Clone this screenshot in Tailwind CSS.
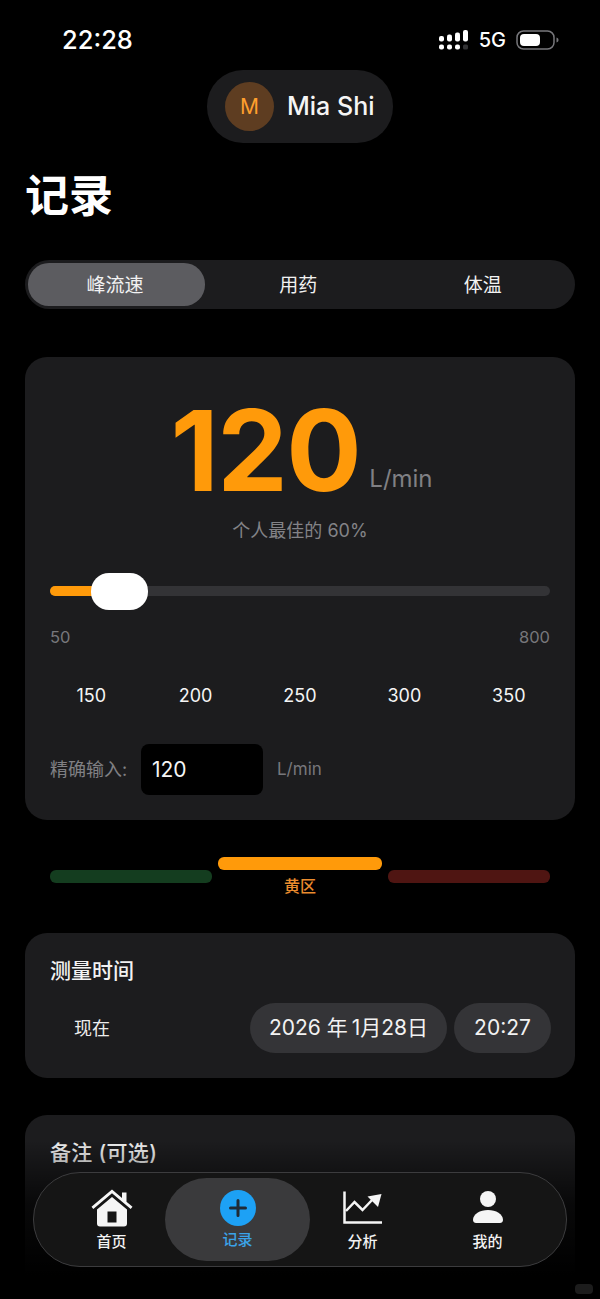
<!DOCTYPE html>
<html lang="zh">
<head>
<meta charset="utf-8">
<script src="https://cdn.jsdelivr.net/npm/@tailwindcss/browser@4"></script>
</head>
<body class="bg-black">
<div class="relative w-[600px] h-[1299px] overflow-hidden bg-black text-white font-['Inter','Noto_Sans_CJK_SC',sans-serif]">

  <!-- status bar -->
  <div class="h-[70px] flex items-center justify-between pl-[62px] pr-[41px] pt-[10px]">
    <span class="text-[25.500px] leading-none font-medium">22:28</span>
    <div class="flex items-center">
      <svg width="30" height="20" viewBox="0 0 30 20" fill="#fff">
        <rect x="0" y="6" width="5" height="5.500" rx="2"/><rect x="0" y="14.500" width="5" height="5" rx="2"/>
        <rect x="8" y="4.500" width="5" height="7" rx="2"/><rect x="8" y="14.500" width="5" height="5" rx="2"/>
        <rect x="16" y="2.500" width="5" height="9" rx="2"/><rect x="16" y="14.500" width="5" height="5" rx="2"/>
        <rect x="24" y="0" width="5" height="11.500" rx="2"/><rect x="24" y="14.500" width="5" height="5" rx="1.500" fill="#333335"/>
      </svg>
      <span class="ml-[10px] text-[20px] leading-none font-medium">5G</span>
      <svg class="ml-[10px]" width="43" height="20" viewBox="0 0 43 20">
        <rect x="1" y="1" width="37" height="18" rx="6.500" fill="none" stroke="#77777b" stroke-width="1.500"/>
        <rect x="4" y="4" width="20" height="12" rx="4" fill="#fff"/>
        <path d="M40.500 7.500c1.500.5 2 1.500 2 2.500s-.5 2-2 2.500z" fill="#77777b"/>
      </svg>
    </div>
  </div>

  <!-- profile pill -->
  <div class="flex justify-center">
    <div class="w-[186px] h-[73px] rounded-[36px] bg-[#1c1c1e] flex items-center pl-[18px]">
      <div class="w-[49px] h-[49px] rounded-full bg-[#5e3d21] flex items-center justify-center text-[#ff9f2e] text-[21px]">M</div>
      <span class="ml-[13px] text-[25px] leading-none font-medium text-[#f5f5f5]">Mia Shi</span>
    </div>
  </div>

  <!-- content -->
  <div class="px-[25px]">
    <h1 class="mt-[28px] h-[50px] text-[44px] leading-[50px] font-bold">记录</h1>

    <!-- segmented -->
    <div class="mt-[39px] h-[49px] rounded-[25px] bg-[#1c1c1e] p-[3px] grid grid-cols-[177px_1fr_1fr] text-[19px] items-center text-center text-[#f2f2f2]">
      <div class="h-[43px] rounded-[21px] bg-[#5c5c60] flex items-center justify-center pt-[3px] pr-[3px]">峰流速</div>
      <div class="pl-[3px] pt-[3px]">用药</div>
      <div class="pl-[5px] pt-[3px]">体温</div>
    </div>

    <!-- main card -->
    <div class="mt-[48px] h-[463px] rounded-[22px] bg-[#1c1c1e] px-[25px]">
      <div class="h-[138px] flex items-end justify-center">
        <span class="text-[#ff9a0a] text-[112px] leading-none font-bold tracking-[-1.500px] ml-[3px] translate-y-[11px]">120</span>
        <span class="ml-[9px] text-[#808084] text-[24px] leading-none translate-y-[-4px]">L/min</span>
      </div>
      <div class="mt-[26px] h-[20px] text-center text-[18px] leading-[20px] text-[#838387]">个人最佳的 60%</div>

      <div class="relative mt-[45px] h-[10px] rounded-full bg-[#333336]">
        <div class="h-full w-[50px] rounded-l-full bg-[#ff9a0a]"></div>
        <div class="absolute left-[41px] top-[-13px] w-[57px] h-[37px] rounded-[18px] bg-white"></div>
      </div>

      <div class="mt-[31px] flex justify-between text-[16.500px] leading-[20px] text-[#77777b]">
        <span>50</span><span>800</span>
      </div>

      <div class="mt-[38px] grid grid-cols-5 -mx-[11px] text-[18px] leading-[22px] text-center text-[#f5f5f5]">
        <span>150</span><span>200</span><span>250</span><span>300</span><span>350</span>
      </div>

      <div class="mt-[37px] flex items-center">
        <span class="w-[91px] text-[18px] text-[#808084]">精确输入:</span>
        <div class="w-[122px] h-[51px] rounded-[8px] bg-black pl-[11px] flex items-center text-[21px] text-[#f5f5f5]">120</div>
        <span class="ml-[14px] text-[17px] text-[#77777b]">L/min</span>
      </div>
    </div>

    <!-- zones -->
    <div class="mt-[37px] mx-[25px] h-[40px] grid grid-cols-[162px_164px_1fr] gap-[6px]">
      <div class="pt-[13px]"><div class="h-[13px] rounded-[6px] bg-[#143d1f]"></div></div>
      <div class="text-center">
        <div class="h-[13px] rounded-[6px] bg-[#ff9a0a]"></div>
        <div class="mt-[6px] text-[16px] leading-[20px] font-medium text-[#ea8c2e]">黄区</div>
      </div>
      <div class="pt-[13px]"><div class="h-[13px] rounded-[6px] bg-[#4f1512]"></div></div>
    </div>

    <!-- time card -->
    <div class="mt-[36px] h-[145px] rounded-[22px] bg-[#1c1c1e] px-[25px] pt-[25px]">
      <div class="text-[21px] leading-[26px] font-medium text-[#f2f2f2]">测量时间</div>
      <div class="mt-[19px] -mr-px flex items-center">
        <span class="ml-[24px] text-[18px] text-[#ededed]">现在</span>
        <div class="ml-auto w-[197px] h-[50px] rounded-[25px] bg-[#343437] flex items-center justify-center text-[21px] text-[#f2f2f2]">2026 年<span class="ml-[4px]">1月28日</span></div>
        <div class="ml-[7px] w-[97px] h-[50px] rounded-[25px] bg-[#343437] flex items-center justify-center text-[21px] text-[#f2f2f2]">20:27</div>
      </div>
    </div>

    <!-- notes card -->
    <div class="mt-[37px] h-[200px] rounded-[22px] bg-[#1c1c1e] px-[25px] pt-[25px]">
      <div class="text-[21px] leading-[26px] font-medium tracking-[0.300px] text-[#f2f2f2]">备注 (可选)</div>
    </div>
  </div>

  <!-- bottom fade -->
  <div class="absolute left-0 right-0 top-[1140px] bottom-0 bg-gradient-to-b from-black/0 via-black/70 via-[40%] to-black to-[85%]"></div>

  <!-- tab bar -->
  <nav class="absolute left-[33px] top-[1172px] w-[534px] h-[95px] rounded-[47px] border border-[#3c3c3e] bg-[#151515] grid grid-cols-4 px-[16px] items-center text-center text-[15px] leading-[18px] font-medium text-[#f2f2f2]">
    <a class="flex flex-col items-center pt-[2px] -translate-x-px">
      <svg width="42" height="38" viewBox="0 0 42 38" fill="#f5f5f5" class="-translate-y-[2px]">
        <path d="M0.500 17.800 21 0.500 31 9V3.500h4.500v9.300L41.500 17.800 39.700 20 21 4.300 2.300 20z"/>
        <path fill-rule="evenodd" d="M21 8 36 20.500V34.500a3 3 0 0 1-3 3H9a3 3 0 0 1-3-3V20.500zM16.500 22.500v11h9v-11z"/>
      </svg>
      <span class="mt-[4px]">首页</span>
    </a>
    <a class="-mx-[10px] h-[83px] rounded-[42px] bg-[#3a3a3c] flex flex-col items-center justify-center text-[#3aa3e8]">
      <svg width="36" height="36" viewBox="0 0 36 36" class="mb-[1px]">
        <circle cx="18" cy="18" r="18" fill="#1da1f5"/>
        <path d="M18 10.500v15M10.500 18h15" stroke="#1f2a36" stroke-width="3" stroke-linecap="round"/>
      </svg>
      <span class="mt-[4px]">记录</span>
    </a>
    <a class="flex flex-col items-center pt-[2px]">
      <svg width="40" height="34" viewBox="0 0 40 34" fill="none">
        <path d="M1.500 0.500V31.500H39" stroke="#f5f5f5" stroke-width="2.500"/>
        <path d="M3 20 11.500 11 19.500 19 30 8" stroke="#f5f5f5" stroke-width="2.500"/>
        <path d="M24.500 5.500 38.500 3 35 16z" fill="#f5f5f5"/>
      </svg>
      <span class="mt-[8px]">分析</span>
    </a>
    <a class="flex flex-col items-center pt-[2px]">
      <svg width="30" height="34" viewBox="0 0 30 34" fill="#f5f5f5">
        <circle cx="15" cy="8" r="8"/>
        <path d="M0 29c0-6 7-10 15-10s15 4 15 10c0 2-1.500 3-3 3H3c-1.500 0-3-1-3-3z"/>
      </svg>
      <span class="mt-[8px]">我的</span>
    </a>
  </nav>

  <!-- watermark chip -->
  <div class="absolute left-[575px] top-[1284px] w-[18px] h-[10px] rounded-[4px] bg-[#1c1c1c]"></div>
</div>
</body>
</html>
